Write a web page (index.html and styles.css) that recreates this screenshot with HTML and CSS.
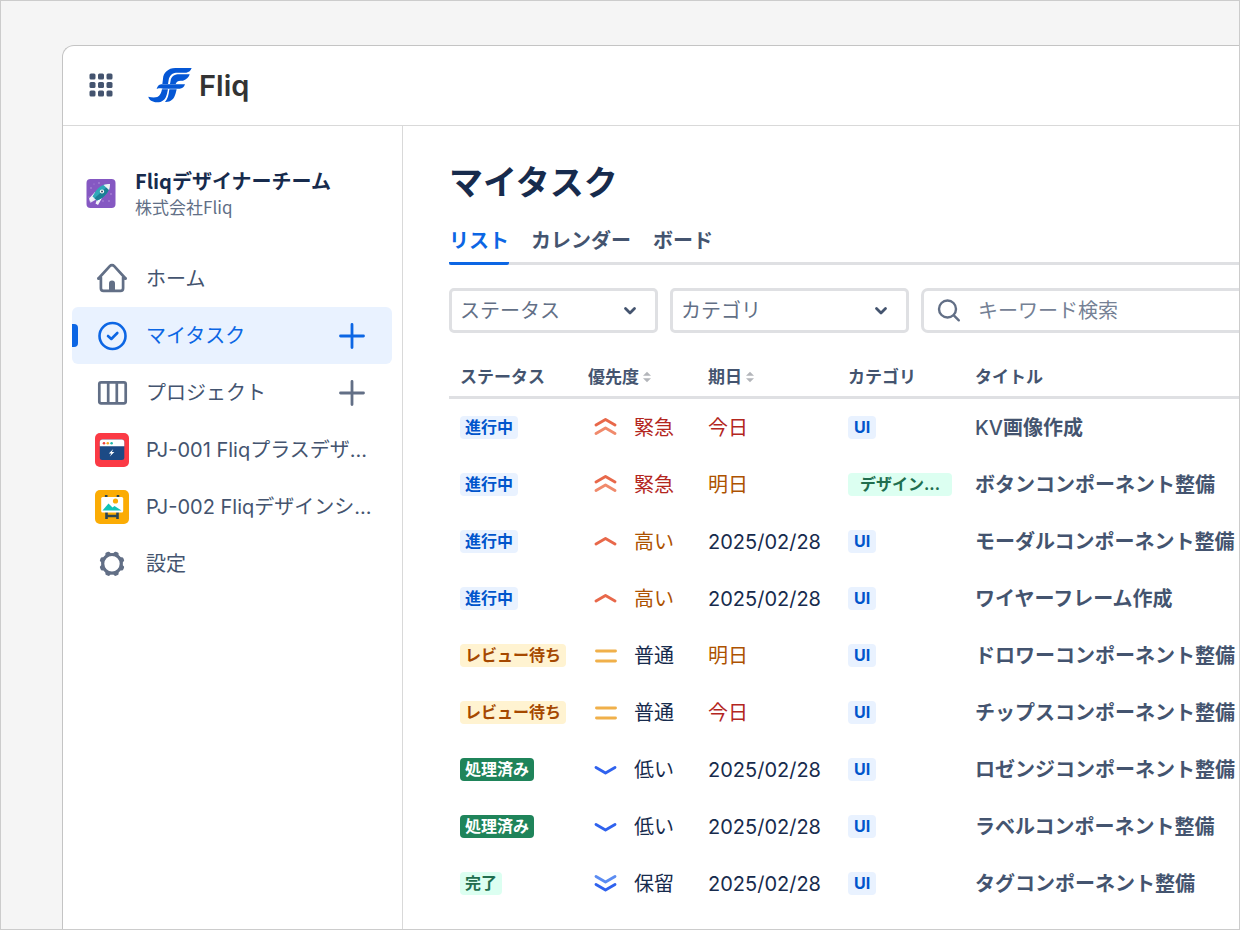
FILE: index.html
```html
<!DOCTYPE html>
<html lang="ja">
<head>
    <meta charset="UTF-8">
    <meta name="viewport" content="width=device-width, initial-scale=1.0">
    <title>マイタスク | Fliq</title>
    <link rel="stylesheet" href="styles.css">
</head>
<body>
    <!-- Shared symbols -->
    <svg class="sprite" aria-hidden="true">
        <symbol id="plus" viewBox="0 0 28 28"><path d="M14 2.500v23M2.500 14h23" fill="none" stroke="currentColor" stroke-width="2.800" stroke-linecap="round"/></symbol>
        <symbol id="chevron" viewBox="0 0 14 10"><path d="M2.500 2.500 7 7l4.500-4.500" fill="none" stroke="currentColor" stroke-width="2.800" stroke-linecap="round" stroke-linejoin="round"/></symbol>
        <symbol id="sort" viewBox="0 0 10 12"><path d="M5 .8 9 4.800H1zM5 11.200 1 7.200h8z" fill="#b3b5ba"/></symbol>
        <symbol id="urgent" viewBox="0 0 24 24"><g fill="none" stroke-width="2.900" stroke-linecap="round" stroke-linejoin="round"><path d="m3 9 9.500-5.500L22 9" stroke="#e8684a"/><path d="m3 17.500 9.500-5.500 9.500 5.500" stroke="#f08a6c"/></g></symbol>
        <symbol id="high" viewBox="0 0 24 24"><path d="m3 14 9.500-5.500L22 14" fill="none" stroke="#e8684a" stroke-width="2.900" stroke-linecap="round" stroke-linejoin="round"/></symbol>
        <symbol id="medium" viewBox="0 0 24 24"><path d="M3.500 7h19M3.500 17h19" fill="none" stroke="#f0b04a" stroke-width="2.900" stroke-linecap="round"/></symbol>
        <symbol id="low" viewBox="0 0 24 24"><path d="m3 9.500 9.500 5.500L22 9.500" fill="none" stroke="#2f62ee" stroke-width="2.900" stroke-linecap="round" stroke-linejoin="round"/></symbol>
        <symbol id="hold" viewBox="0 0 24 24"><g fill="none" stroke-width="2.900" stroke-linecap="round" stroke-linejoin="round"><path d="m3 4.500 9.500 5.500L22 4.500" stroke="#5b8cf2"/><path d="m3 12.500 9.500 5.500 9.500-5.500" stroke="#2f62ee"/></g></symbol>
    </svg>

    <div class="app">
        <header class="header">
            <button class="icon-button" type="button" aria-label="メニュー">
                <svg class="grid-icon" viewBox="0 0 24 24" fill="#44546f">
                    <rect x="0.500" y="0.500" width="6" height="6" rx="1.500"/><rect x="9" y="0.500" width="6" height="6" rx="1.500"/><rect x="17.500" y="0.500" width="6" height="6" rx="1.500"/>
                    <rect x="0.500" y="9" width="6" height="6" rx="1.500"/><rect x="9" y="9" width="6" height="6" rx="1.500"/><rect x="17.500" y="9" width="6" height="6" rx="1.500"/>
                    <rect x="0.500" y="17.500" width="6" height="6" rx="1.500"/><rect x="9" y="17.500" width="6" height="6" rx="1.500"/><rect x="17.500" y="17.500" width="6" height="6" rx="1.500"/>
                </svg>
            </button>
            <a class="logo" href="#">
                <svg class="logo-mark" viewBox="445 200 132 108" fill="#0557d5" aria-hidden="true">
                    <path d="M576 203H527C505 203 491 218 490 235L488 251H505L507 239C509 226 517 218 529 217H560Q572 215 576 203Z"/>
                    <path d="M570 222H534C522 223 514 232 513 240L511 251H528C531 243 535 241 543 241H550C561 238 568 230 570 222Z"/>
                    <path d="M471 267C473 256 480 252 488 252H556C553 261 548 265 540 265H490C481 264 475 263 471 267Z"/>
                    <path d="M487 267H505L502 280C498 298 487 306 472 306C458 305 448 299 446 289C456 292 466 292 473 290C481 287 485 277 487 267Z"/>
                    <path d="M509 267H531L528 279C523 298 512 306 496 305C504 297 507 284 509 267Z"/>
                </svg>
                <span>Fliq</span>
            </a>
        </header>

        <div class="body">
            <aside class="sidebar">
                <div class="team">
                    <svg class="team-icon" viewBox="0 0 30 30" aria-hidden="true">
                        <rect x=".5" y="1" width="29" height="29" rx="4" fill="#8558c2"/>
                        <g fill="#b99ae0"><circle cx="5" cy="10" r=".8"/><circle cx="13" cy="5" r=".8"/><circle cx="25" cy="16" r=".8"/><circle cx="23" cy="23" r=".8"/><circle cx="17" cy="23" r=".7"/><circle cx="8" cy="6" r=".5"/><circle cx="3" cy="19" r=".6"/></g>
                        <path d="m9 14-6 6.500 1 3.500 7-4zM16 20l-4 7-2.500-1.500L12 19z" fill="#f1f3f8"/>
                        <path d="m8 18.500-4 6.500 7-4z" fill="#e9edf5"/>
                        <path d="M24 6C17 6 12 8 6.500 18.500l4.500 4c8-3 13-9.500 13-16.500Z" fill="#2fa8b8"/>
                        <path d="M24 6 8.500 20.300l2.500 2.200c8-3 13-9.500 13-16.500Z" fill="#1b7f96"/>
                        <path d="M24 6c-2.500 0-4.500.2-6.500 1l5.500 5c.8-2 1-4 1-6Z" fill="#eef1f6"/>
                        <circle cx="16" cy="13.500" r="2.100" fill="#fff"/><circle cx="16" cy="13.500" r="1" fill="#3a4a66"/>
                    </svg>
                    <div>
                        <p class="team-name">Fliqデザイナーチーム</p>
                        <p class="team-company">株式会社Fliq</p>
                    </div>
                </div>

                <nav class="nav">
                    <div class="nav-item">
                        <a href="#">
                            <svg class="nav-icon" viewBox="0 0 34 34"><g fill="none" stroke="currentColor" stroke-width="2.700" stroke-linecap="round" stroke-linejoin="round"><path d="M3.500 16.500 14.800 4.100a3 3 0 0 1 4.400 0L30.500 16.500"/><path d="M3.500 16.500H5.800M30.500 16.500h-2.300M5.900 15.500v10.700a2.600 2.600 0 0 0 2.600 2.600h17a2.600 2.600 0 0 0 2.600-2.600V15.500"/></g><path d="M14 28.500v-7a3 3 0 0 1 6 0v7z" fill="currentColor"/></svg>
                            <span>ホーム</span>
                        </a>
                    </div>
                    <div class="nav-item active">
                        <a href="#" aria-current="page">
                            <svg class="nav-icon" viewBox="0 0 34 34" fill="none" stroke="currentColor" stroke-width="2.600" stroke-linecap="round" stroke-linejoin="round"><circle cx="17.500" cy="17" r="13"/><path d="m13 17 3.300 3 6-6"/></svg>
                            <span>マイタスク</span>
                        </a>
                        <button class="icon-button" type="button" aria-label="タスクを追加"><svg class="plus-icon"><use href="#plus"/></svg></button>
                    </div>
                    <div class="nav-item">
                        <a href="#">
                            <svg class="nav-icon" viewBox="0 0 34 34" fill="none" stroke="currentColor" stroke-width="2.700"><rect x="4.300" y="6.300" width="26.400" height="21" rx="1.800"/><path d="M13.200 6.500v21M21.800 6.500v21"/></svg>
                            <span>プロジェクト</span>
                        </a>
                        <button class="icon-button" type="button" aria-label="プロジェクトを追加"><svg class="plus-icon"><use href="#plus"/></svg></button>
                    </div>
                    <div class="nav-item">
                        <a href="#">
                            <svg class="nav-icon" viewBox="0 0 34 34"><rect width="34" height="34" rx="5" fill="#fb3a45"/><rect x="4.800" y="6.500" width="24.500" height="20.500" rx="2.500" fill="#1c4a85"/><path d="M4.800 13.200V9A2.500 2.500 0 0 1 7.300 6.500h19.500A2.500 2.500 0 0 1 29.300 9v4.200z" fill="#fff"/><circle cx="9" cy="10.200" r="1.300" fill="#f0433e"/><circle cx="12.800" cy="10.200" r="1.300" fill="#f7a823"/><circle cx="16.600" cy="10.200" r="1.300" fill="#1fb8aa"/><path d="m18.300 16-4.500 4.500h2.500l-1.500 3 4.600-4.500h-2.600z" fill="#fff"/></svg>
                            <span>PJ-001 Fliqプラスデザ...</span>
                        </a>
                    </div>
                    <div class="nav-item">
                        <a href="#">
                            <svg class="nav-icon" viewBox="0 0 34 34"><rect width="34" height="34" rx="5" fill="#fbac05"/><path d="M11.200 5v4M23 5v4M11.500 22v7M22.500 22v7M11.500 26h11" stroke="#2b4552" stroke-width="2.600"/><rect x="6.200" y="7" width="22" height="15.500" rx="1.500" fill="#fff"/><circle cx="20.500" cy="11" r="2.600" fill="#fbac05"/><path d="m7.500 20.500 6-7 4 4 2-1.500 7 4.500z" fill="#10c3b8"/></svg>
                            <span>PJ-002 Fliqデザインシ...</span>
                        </a>
                    </div>
                    <div class="nav-item">
                        <a href="#">
                            <svg class="nav-icon" viewBox="0 0 34 34"><circle cx="17" cy="16.800" r="9.300" fill="none" stroke="currentColor" stroke-width="3.200"/><g fill="currentColor"><path id="tooth" d="M13.600 8.500 14.600 5.300a1.500 1.500 0 0 1 1.400-1.100h2a1.500 1.500 0 0 1 1.400 1.100l1 3.200z" transform="rotate(22.500 17 16.800)"/><use href="#tooth" transform="rotate(45 17 16.800)"/><use href="#tooth" transform="rotate(90 17 16.800)"/><use href="#tooth" transform="rotate(135 17 16.800)"/><use href="#tooth" transform="rotate(180 17 16.800)"/><use href="#tooth" transform="rotate(225 17 16.800)"/><use href="#tooth" transform="rotate(270 17 16.800)"/><use href="#tooth" transform="rotate(315 17 16.800)"/></g></svg>
                            <span>設定</span>
                        </a>
                    </div>
                </nav>
            </aside>

            <main class="main">
                <h1>マイタスク</h1>

                <nav class="tabs">
                    <a class="active" href="#" aria-current="page">リスト</a>
                    <a href="#">カレンダー</a>
                    <a href="#">ボード</a>
                </nav>

                <form class="filters">
                    <div class="select select-status">
                        <select aria-label="ステータス"><option>ステータス</option></select>
                        <svg><use href="#chevron"/></svg>
                    </div>
                    <div class="select select-category">
                        <select aria-label="カテゴリ"><option>カテゴリ</option></select>
                        <svg><use href="#chevron"/></svg>
                    </div>
                    <label class="search">
                        <svg viewBox="0 0 24 24" fill="none" stroke="currentColor" stroke-width="2.400" stroke-linecap="round" aria-hidden="true"><circle cx="10.500" cy="10" r="8.500"/><path d="m16.800 16.300 5 5"/></svg>
                        <input type="search" aria-label="キーワード検索" placeholder="キーワード検索">
                    </label>
                </form>

                <table class="tasks">
                    <colgroup>
                        <col class="col-status">
                        <col class="col-priority">
                        <col class="col-due">
                        <col class="col-category">
                        <col>
                    </colgroup>
                    <thead>
                        <tr>
                            <th scope="col">ステータス</th>
                            <th scope="col"><button type="button">優先度<svg><use href="#sort"/></svg></button></th>
                            <th scope="col"><button type="button">期日<svg><use href="#sort"/></svg></button></th>
                            <th scope="col">カテゴリ</th>
                            <th scope="col">タイトル</th>
                        </tr>
                    </thead>
                    <tbody>
                        <tr>
                            <td><span class="badge blue">進行中</span></td>
                            <td><div class="priority red"><svg><use href="#urgent"/></svg>緊急</div></td>
                            <td class="red">今日</td>
                            <td><span class="badge category blue">UI</span></td>
                            <td class="title"><span class="latin">KV</span>画像作成</td>
                        </tr>
                        <tr>
                            <td><span class="badge blue">進行中</span></td>
                            <td><div class="priority red"><svg><use href="#urgent"/></svg>緊急</div></td>
                            <td class="orange">明日</td>
                            <td><span class="badge mint wide">デザイン...</span></td>
                            <td class="title">ボタンコンポーネント整備</td>
                        </tr>
                        <tr>
                            <td><span class="badge blue">進行中</span></td>
                            <td><div class="priority orange"><svg><use href="#high"/></svg>高い</div></td>
                            <td>2025/02/28</td>
                            <td><span class="badge category blue">UI</span></td>
                            <td class="title">モーダルコンポーネント整備</td>
                        </tr>
                        <tr>
                            <td><span class="badge blue">進行中</span></td>
                            <td><div class="priority orange"><svg><use href="#high"/></svg>高い</div></td>
                            <td>2025/02/28</td>
                            <td><span class="badge category blue">UI</span></td>
                            <td class="title">ワイヤーフレーム作成</td>
                        </tr>
                        <tr>
                            <td><span class="badge yellow">レビュー待ち</span></td>
                            <td><div class="priority"><svg><use href="#medium"/></svg>普通</div></td>
                            <td class="orange">明日</td>
                            <td><span class="badge category blue">UI</span></td>
                            <td class="title">ドロワーコンポーネント整備</td>
                        </tr>
                        <tr>
                            <td><span class="badge yellow">レビュー待ち</span></td>
                            <td><div class="priority"><svg><use href="#medium"/></svg>普通</div></td>
                            <td class="red">今日</td>
                            <td><span class="badge category blue">UI</span></td>
                            <td class="title">チップスコンポーネント整備</td>
                        </tr>
                        <tr>
                            <td><span class="badge green">処理済み</span></td>
                            <td><div class="priority"><svg><use href="#low"/></svg>低い</div></td>
                            <td>2025/02/28</td>
                            <td><span class="badge category blue">UI</span></td>
                            <td class="title">ロゼンジコンポーネント整備</td>
                        </tr>
                        <tr>
                            <td><span class="badge green">処理済み</span></td>
                            <td><div class="priority"><svg><use href="#low"/></svg>低い</div></td>
                            <td>2025/02/28</td>
                            <td><span class="badge category blue">UI</span></td>
                            <td class="title">ラベルコンポーネント整備</td>
                        </tr>
                        <tr>
                            <td><span class="badge mint">完了</span></td>
                            <td><div class="priority"><svg><use href="#hold"/></svg>保留</div></td>
                            <td>2025/02/28</td>
                            <td><span class="badge category blue">UI</span></td>
                            <td class="title">タグコンポーネント整備</td>
                        </tr>
                    </tbody>
                </table>
            </main>
        </div>
    </div>
</body>
</html>
```
FILE: styles.css
```css
* {
    box-sizing: border-box;
}

body {
    margin: 0;
    min-height: 100vh;
    padding: 44px 0 0 61px;
    display: flex;
    flex-direction: column;
    border: 1px solid #cccccc;
    background-color: #f5f5f5;
    color: #172b4d;
    font-family: Inter, "Noto Sans CJK JP", sans-serif;
    font-size: 20px;
    line-height: 28px;
}

h1, p {
    margin: 0;
}

a {
    color: inherit;
    text-decoration: none;
}

button {
    padding: 0;
    border: none;
    background: none;
    color: inherit;
    font: inherit;
    cursor: pointer;
}

.sprite {
    display: none;
}

.app {
    flex: 1;
    display: flex;
    flex-direction: column;
    border: 1px solid #c4c4c4;
    border-width: 1px 0 0 1px;
    border-top-left-radius: 12px;
    background: #ffffff;
    overflow: hidden;
}

.icon-button {
    display: flex;
}

/* Header */
.header {
    display: flex;
    align-items: center;
    gap: 35px;
    height: 80px;
    padding: 0 26px 2px;
    border-bottom: 1px solid #d9d9d9;
}

.grid-icon {
    width: 24px;
    height: 24px;
}

.logo {
    display: flex;
    align-items: center;
    gap: 7px;
    color: #333333;
    font-size: 29px;
    line-height: 36px;
    font-weight: 600;
}

.logo span {
    padding-top: 3px;
}

.logo-mark {
    width: 44px;
    height: 36px;
}

.body {
    flex: 1;
    display: flex;
}

/* Sidebar */
.sidebar {
    flex: none;
    width: 340px;
    padding: 41px 10px 0 9px;
    border-right: 1px solid #d9d9d9;
}

.team {
    display: flex;
    align-items: center;
    gap: 19px;
    padding: 0 14px;
    margin-bottom: 31px;
}

.team-icon {
    width: 30px;
    height: 30px;
}

.team-name {
    font-family: "Noto Sans CJK JP", sans-serif;
    font-weight: 700;
}

.team-company {
    color: #626f86;
    font-family: "Noto Sans CJK JP", sans-serif;
    font-size: 17px;
    line-height: 24px;
}

.nav-item {
    display: flex;
    align-items: center;
    height: 57px;
    padding: 0 26px 0 23px;
    border-radius: 6px;
    color: #626f86;
    position: relative;
}

.nav-item a {
    flex: 1;
    display: flex;
    align-items: center;
    gap: 17px;
    white-space: nowrap;
}

.nav-item a span {
    color: #44546f;
}

.nav-item.active,
.nav-item.active a span {
    color: #0c66e4;
}

.nav-item.active {
    background: #e9f2ff;
}

.nav-item.active::before {
    content: "";
    position: absolute;
    left: 0;
    width: 6px;
    height: 23px;
    border-radius: 0 4px 4px 0;
    background: #0c66e4;
}

.nav-icon {
    flex: none;
    width: 34px;
    height: 34px;
}

.plus-icon {
    width: 28px;
    height: 28px;
}

/* Main */
.main {
    flex: 1;
    min-width: 0;
    padding: 33px 0 0 46px;
}

h1 {
    font-size: 34px;
    line-height: 48px;
    font-weight: 700;
}

.tabs {
    display: flex;
    gap: 22px;
    margin-top: 20px;
    border-bottom: 3px solid #dfe0e3;
    color: #44546f;
    font-weight: 700;
}

.tabs a {
    margin-bottom: -3px;
    padding-bottom: 7px;
    border-bottom: 3px solid transparent;
}

.tabs .active {
    border-color: #0c66e4;
    border-radius: 2px;
    color: #0c66e4;
}

.filters {
    display: flex;
    gap: 12px;
    margin-top: 23px;
}

.select {
    flex: none;
    position: relative;
    color: #44546f;
}

.select-status {
    width: 209px;
}

.select-category {
    width: 239px;
}

.select select {
    appearance: none;
    width: 100%;
    height: 45px;
    padding: 0 8px;
    border: 3px solid #dfe0e3;
    border-radius: 5px;
    background: #ffffff;
    color: #626f86;
    font: inherit;
}

.select svg {
    position: absolute;
    top: 18px;
    right: 21px;
    width: 14px;
    height: 10px;
    pointer-events: none;
}

.search {
    flex: 1;
    min-width: 0;
    display: flex;
    align-items: center;
    gap: 17px;
    height: 45px;
    padding-left: 13px;
    border: 3px solid #dfe0e3;
    border-right: none;
    border-radius: 7px 0 0 7px;
    color: #626f86;
}

.search svg {
    flex: none;
    width: 24px;
    height: 24px;
}

.search input {
    flex: 1;
    min-width: 0;
    padding: 0;
    border: none;
    outline: none;
    background: none;
    font: inherit;
}

.search input::placeholder {
    color: #758195;
}

/* Task table */
.tasks {
    width: 100%;
    margin-top: 23px;
    border-collapse: separate;
    border-spacing: 0;
    table-layout: fixed;
    white-space: nowrap;
}

.col-status,
.col-category {
    width: 127px;
}

.col-priority {
    width: 120px;
}

.col-due {
    width: 140px;
}

.tasks th,
.tasks td {
    padding: 0 0 0 12px;
    text-align: left;
}

.tasks td:first-child,
.tasks th:first-child {
    padding-left: 11px;
}

.tasks th {
    height: 43px;
    padding-top: 2px;
    border-bottom: 3px solid #dfe0e3;
    color: #44546f;
    font-size: 17px;
    font-weight: 700;
}

.tasks th button {
    display: flex;
    align-items: center;
    gap: 3px;
}

.tasks th svg {
    width: 10px;
    height: 12px;
}

.tasks td {
    height: 57px;
}

.tasks .title {
    color: #44546f;
    font-weight: 600;
}

.title .latin {
    font-weight: 500;
}

.priority {
    display: flex;
    align-items: center;
    gap: 17px;
    padding-left: 5px;
}

.priority svg {
    width: 24px;
    height: 24px;
}

.tasks .red {
    color: #b3261e;
}

.tasks .orange {
    color: #ad5200;
}

.badge {
    display: block;
    width: fit-content;
    padding: 0 5px;
    border-radius: 4px;
    font-size: 16px;
    line-height: 23px;
    font-weight: 700;
}

.badge.category {
    padding: 0 6px;
}

.badge.wide {
    padding: 0 12px;
}

.badge.blue {
    background: #e9f2ff;
    color: #0055cc;
}

.badge.mint {
    background: #dcfff1;
    color: #216e4e;
}

.badge.yellow {
    background: #fff3d1;
    color: #a54800;
}

.badge.green {
    background: #1f845a;
    color: #ffffff;
}
```
